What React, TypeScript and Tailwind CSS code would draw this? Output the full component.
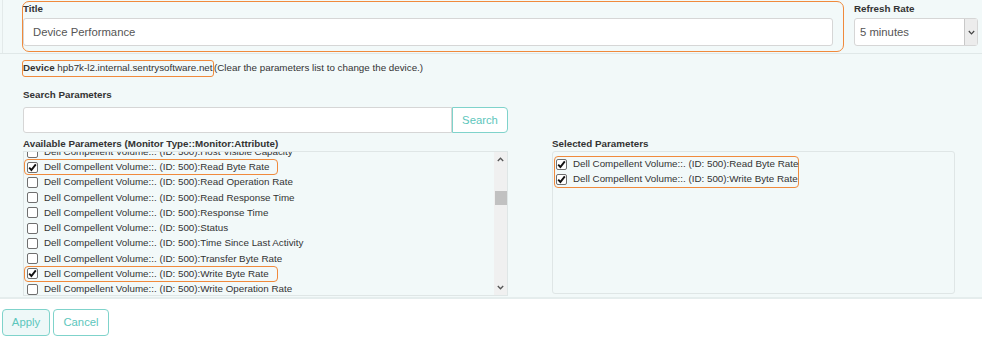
import React from 'react';

const ORANGE = 'border-[#f08a3c]';

const available = [
  { label: 'Host Visible Capacity', checked: false },
  { label: 'Read Byte Rate', checked: true, mark: true },
  { label: 'Read Operation Rate', checked: false },
  { label: 'Read Response Time', checked: false },
  { label: 'Response Time', checked: false },
  { label: 'Status', checked: false },
  { label: 'Time Since Last Activity', checked: false },
  { label: 'Transfer Byte Rate', checked: false },
  { label: 'Write Byte Rate', checked: true, mark: true },
  { label: 'Write Operation Rate', checked: false },
];

const PREFIX = 'Dell Compellent Volume::. (ID: 500):';

const Box: React.FC<{ checked: boolean }> = ({ checked }) => (
  <span className="w-[11px] h-[11px] shrink-0 border border-[#6f6f6f] rounded-[2px] bg-white flex items-center justify-center">
    {checked && (
      <svg width="9" height="9" viewBox="0 0 9 9">
        <path d="M1.2 4.6 L3.4 7 L7.8 1.4" fill="none" stroke="#111" strokeWidth="1.9" />
      </svg>
    )}
  </span>
);

const Row: React.FC<{ label: string; checked: boolean; mark?: boolean }> = ({ label, checked, mark }) => (
  <div className="h-[15.24px] flex items-center">
    <div
      className={
        'flex items-center gap-[6px] h-[14px] pl-[2px] pr-[8px] rounded-[3px] ' +
        (mark ? 'outline outline-1 outline-[#f08a3c]' : '')
      }
    >
      <Box checked={checked} />
      <span className="whitespace-nowrap text-[9.8px] leading-[14px] text-[#333]">
        {PREFIX}
        {label}
      </span>
    </div>
  </div>
);

const Label: React.FC<{ children: React.ReactNode }> = ({ children }) => (
  <div className="text-[9.8px] leading-[14px] font-bold text-[#333] whitespace-nowrap">{children}</div>
);

export default function App() {
  return (
    <div className="w-[982px] h-[338px] bg-white overflow-hidden font-['Liberation_Sans',Arial,sans-serif] text-[#333]">
      <div className="h-[299px] bg-[#f2f9f9] border-b-2 border-[#e5eded]">
        {/* top row */}
        <div className="h-[54px] border-b border-[#e0e8e8] flex items-start">
          <div className="w-[22px] h-full flex">
            <div className="ml-[2px] w-px h-full bg-[#e3eaea]" />
          </div>
          <div className={`mt-[1px] w-[822px] h-[51px] border ${ORANGE} rounded-[7px]`}>
            <div className="pt-[1px]">
              <div className="text-[9.8px] leading-[12px] font-bold text-[#333]">Title</div>
            </div>
            <div className="mt-[3px] w-[810px] h-[28px] bg-white border border-[#d6d6d6] rounded-[3px] flex items-center pl-[9px] text-[11.3px] text-[#555]">
              Device Performance
            </div>
          </div>
          <div className="ml-[10px] mt-[3px] w-[124px]">
            <div className="text-[9.8px] leading-[12px] font-bold text-[#333]">Refresh Rate</div>
            <div className="mt-[3px] h-[28px] bg-white border border-[#d6d6d6] rounded-[3px] flex items-center">
              <span className="flex-1 pl-[5px] text-[11.3px] text-[#555]">5 minutes</span>
              <span className="w-[13px] h-full border-l border-[#c8c8c8] bg-[#ececec] flex items-center justify-center">
                <svg width="7" height="5" viewBox="0 0 7 5">
                  <path d="M0.8 1 L3.5 3.8 L6.2 1" fill="none" stroke="#444" strokeWidth="1.2" />
                </svg>
              </span>
            </div>
          </div>
        </div>

        <div className="pl-[22px]">
          {/* device */}
          <div className="mt-[6px] flex items-center text-[9.8px] whitespace-nowrap">
            <div className={`h-[17px] w-[192px] border ${ORANGE} rounded-[3px] flex items-center`}>
              <span className="font-bold">Device</span>
              <span>&nbsp;hpb7k-l2.internal.sentrysoftware.net</span>
            </div>
            <span>(Clear the parameters list to change the device.)</span>
          </div>

          <div className="mt-[11px] pl-[1px]">
            <Label>Search Parameters</Label>
          </div>
          <div className="mt-[5px] ml-[1px] flex h-[26px] w-[485px]">
            <div className="flex-1 bg-white border border-[#d6d6d6] rounded-l-[3px]" />
            <button className="w-[56px] bg-white border border-[#7fd3cb] rounded-r-[4px] text-[11.3px] text-[#5cc6bc]">
              Search
            </button>
          </div>

          <div className="mt-[4px] flex">
            <div className="w-[486px] pl-[1px]">
              <Label>Available Parameters (Monitor Type::Monitor:Attribute)</Label>
              <div className="h-[145px] border border-[#dfe6e6] flex overflow-hidden">
                <div className="flex-1 overflow-hidden">
                  <div className="mt-[-7.6px] pl-[1px]">
                    {available.map((r) => (
                      <Row key={r.label} label={r.label} checked={r.checked} mark={r.mark} />
                    ))}
                  </div>
                </div>
                <div className="w-[13px] bg-[#f0f0f0] flex flex-col items-center">
                  <svg className="mt-[5px]" width="7" height="5" viewBox="0 0 7 5">
                    <path d="M0.8 4 L3.5 1.2 L6.2 4" fill="none" stroke="#555" strokeWidth="1.3" />
                  </svg>
                  <div className="mt-[29px] w-[12px] h-[14px] bg-[#c1c1c1]" />
                  <div className="flex-1" />
                  <svg className="mb-[5px]" width="7" height="5" viewBox="0 0 7 5">
                    <path d="M0.8 1 L3.5 3.8 L6.2 1" fill="none" stroke="#555" strokeWidth="1.3" />
                  </svg>
                </div>
              </div>
            </div>

            <div className="ml-[44px] w-[403px]">
              <Label>Selected Parameters</Label>
              <div className="h-[143px] border border-[#dfe6e6] rounded-[3px] pl-[1px] pt-[4px]">
                <div className={`w-[245px] h-[32px] border ${ORANGE} rounded-[4px] flex flex-col justify-center`}>
                  <div className="h-[15.5px] flex items-center gap-[6px] pl-[1px]">
                    <Box checked />
                    <span className="whitespace-nowrap text-[9.8px]">{PREFIX}Read Byte Rate</span>
                  </div>
                  <div className="h-[15.5px] flex items-center gap-[6px] pl-[1px]">
                    <Box checked />
                    <span className="whitespace-nowrap text-[9.8px]">{PREFIX}Write Byte Rate</span>
                  </div>
                </div>
              </div>
            </div>
          </div>
        </div>
      </div>

      <div className="mt-[10px] ml-[2px] flex gap-[3px]">
        <button className="w-[48px] h-[27px] bg-[#eef8f8] border border-[#7fd3cb] rounded-[4px] text-[11.3px] text-[#5cc6bc]">
          Apply
        </button>
        <button className="w-[56px] h-[27px] bg-white border border-[#7fd3cb] rounded-[4px] text-[11.3px] text-[#5cc6bc]">
          Cancel
        </button>
      </div>
    </div>
  );
}
